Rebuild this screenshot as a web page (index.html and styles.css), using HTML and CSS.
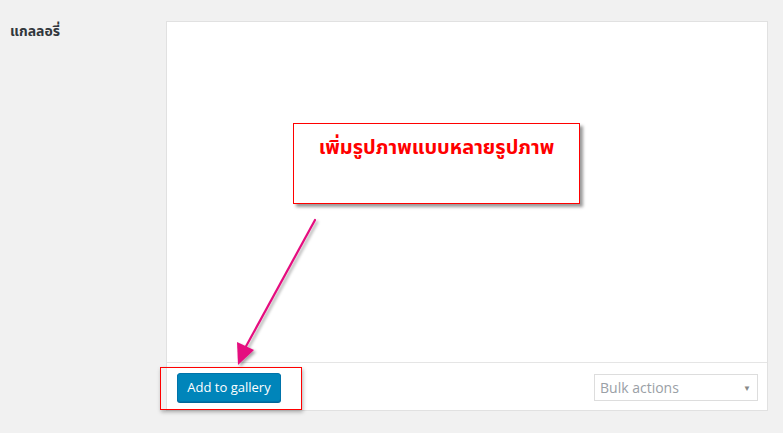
FILE: index.html
```html
<!DOCTYPE html>
<html lang="th">
<head>
<meta charset="utf-8">
<title>Gallery</title>
<link rel="stylesheet" href="styles.css">
</head>
<body>
<div class="row">
  <div class="label">แกลลอรี่</div>
  <div class="panel">
    <div class="panel-body"></div>
    <div class="panel-footer">
      <button class="btn">Add to gallery</button>
      <div class="select"><span>Bulk actions</span><span class="caret">▼</span></div>
    </div>
  </div>
</div>
<div class="callout"><span>เพิ่มรูปภาพแบบหลายรูปภาพ</span></div>
<div class="highlight"></div>
<svg class="arrow" width="120" height="170" viewBox="0 0 120 170">
  <defs>
    <filter id="sh" x="-20%" y="-20%" width="140%" height="140%">
      <feDropShadow dx="2" dy="2" stdDeviation="1.5" flood-color="#000" flood-opacity="0.35"/>
    </filter>
  </defs>
  <g filter="url(#sh)">
    <line x1="95" y1="10" x2="24" y2="140" stroke="#e5107f" stroke-width="2.2" stroke-linecap="round"/>
    <polygon points="18,155 17,132 34,140" fill="#e5107f"/>
  </g>
</svg>
</body>
</html>
```
FILE: styles.css
```css
html, body {
  margin: 0;
  padding: 0;
  background: #f1f1f1;
  font-family: "Open Sans", "Noto Sans", sans-serif;
  width: 783px;
  height: 433px;
  overflow: hidden;
  position: relative;
}
.row {
  display: flex;
  padding-top: 21px;
}
.label {
  width: 156px;
  padding-left: 10px;
  font-family: Tahoma, "Noto Sans Thai", "Noto Sans", "DejaVu Sans", sans-serif;
  font-size: 14px;
  font-weight: bold;
  color: #32373c;
}
.panel {
  width: 600px;
  height: 388px;
  background: #fff;
  border: 1px solid #e1e1e1;
  display: flex;
  flex-direction: column;
}
.panel-body {
  height: 340px;
  border-bottom: 1px solid #e5e5e5;
}
.panel-footer {
  flex: 1;
  display: flex;
  align-items: center;
  justify-content: space-between;
  padding: 0 9px 0 10px;
}
.btn {
  width: 104px;
  height: 29px;
  margin-top: 1px;
  background: #0085ba;
  border: 1px solid #0073aa;
  border-radius: 3px;
  box-shadow: 0 1px 0 #006799;
  color: #fff;
  font-family: "Open Sans", "Noto Sans", sans-serif;
  font-size: 13px;
  padding: 0;
}
.select {
  width: 164px;
  height: 27px;
  border: 1px solid #ddd;
  display: flex;
  align-items: center;
  justify-content: space-between;
  padding: 0 6px 0 5px;
  box-sizing: border-box;
  margin-top: 1px;
  font-size: 14px;
  color: #9aa0a6;
}
.caret {
  font-size: 8px;
  color: #888;
}
.callout {
  position: absolute;
  left: 293px;
  top: 123px;
  width: 287px;
  height: 81px;
  border: 1px solid #ff0000;
  background: #fff;
  box-shadow: 3px 3px 3px rgba(0,0,0,0.4);
  display: flex;
  justify-content: center;
  padding-top: 9px;
  box-sizing: border-box;
}
.callout span {
  font-family: Tahoma, "Noto Sans Thai", "Noto Sans", "DejaVu Sans", serif;
  font-size: 20px;
  font-weight: bold;
  color: #f00;
}
.highlight {
  position: absolute;
  left: 160px;
  top: 367px;
  width: 140px;
  height: 41px;
  border: 1px solid #f00;
  box-shadow: 1px 2px 4px rgba(0,0,0,0.3);
}
.arrow {
  position: absolute;
  left: 220px;
  top: 210px;
}
```
